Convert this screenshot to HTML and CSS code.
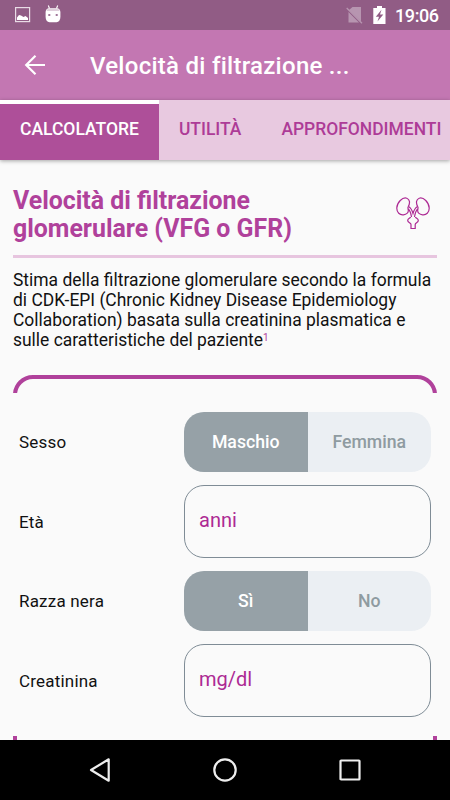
FILE: index.html
```html
<!DOCTYPE html>
<html lang="it">
<head>
<meta charset="utf-8">
<title>Velocità di filtrazione glomerulare</title>
<link rel="stylesheet" href="styles.css">
</head>
<body>
<div class="screen">
  <div class="status">
    <svg class="ic-pic" width="16" height="16" viewBox="0 0 16 16"><rect x=".6" y=".6" width="14" height="14" fill="none" stroke="#e9dce6" stroke-width="1.2"/><path d="M2 13V10.500L4 8L6 8.500L8.500 10L10.500 9L13 11V13Z" fill="#fff"/></svg>
    <svg class="ic-droid" width="16" height="18" viewBox="0 0 16 18"><path d="M3.300 .5L4.600 3.800M12.700 .5L11.400 3.800" stroke="#fff" stroke-width="1.100"/><path d="M.6 7Q1 3.500 4 3.300H12Q15 3.500 15.400 7V12Q15.200 17 11.500 17.200H4.500Q.8 17 .6 12Z" fill="#fff"/><path d="M1.500 6Q2 3.800 4 3.600H12Q14 3.800 14.500 6Z" fill="#e0cfdc"/><path d="M3.300 9h2v2h-2zM10.700 9h2v2h-2z" fill="#a1779a"/></svg>
    <span class="grow"></span>
    <svg class="ic-sim" width="18" height="18" viewBox="0 0 18 18"><path d="M6.500 1H15V15.500L3 3.900ZM2.500 6L13 16.500H2.500Z" fill="#b795b0"/><path d="M.7 2L16 17.300" stroke="#b795b0" stroke-width="1.300"/></svg>
    <svg class="ic-bat" width="13" height="18" viewBox="0 0 13 18"><path d="M4 0H9V2H12.500V18H.3V2H4Z" fill="#fff"/><path d="M8.500 3.800L2.800 10.700H6L4.500 15.500L10.300 8.600H7Z" fill="#915c85"/></svg>
    <span class="clock">19:06</span>
  </div>
  <header class="bar">
    <svg width="22" height="22" viewBox="0 0 22 22" fill="none" stroke="#fff" stroke-width="2.200"><path d="M21 11H2.500M11.500 1.700L2.200 11L11.500 20.300"/></svg>
    <span class="bar-title">Velocità di filtrazione ...</span>
  </header>
  <nav class="tabs">
    <span class="tab active">CALCOLATORE</span>
    <span class="tab">UTILITÀ</span>
    <span class="tab">APPROFONDIMENTI</span>
  </nav>
  <main>
    <div class="head">
      <h1>Velocità di filtrazione<br>glomerulare (VFG o GFR)</h1>
      <svg width="34" height="33" viewBox="0 0 34 33" fill="none" stroke="#ad2a94" stroke-width="1.200"><path d="M12.300 9.500C14.300 6 13.800 2.300 10.800 1.200C6.500-.2 1 5.500 .8 11C.7 15.500 3.800 18.300 7.500 17.800C10.300 17.500 12.500 15.700 12.300 13.300C12.200 11.700 11.500 10.800 12.300 9.500Z"/><path d="M21.700 9.500C19.700 6 20.200 2.300 23.200 1.200C27.500-.2 33 5.500 33.200 11C33.300 15.500 30.200 18.300 26.500 17.800C23.700 17.500 21.500 15.700 21.700 13.300C21.800 11.700 22.500 10.800 21.700 9.500Z"/><path d="M12.500 9.500C14.500 10.500 16 13 17 16.500C18 13 19.500 10.500 21.500 9.500M12.200 12C14 13.500 15 16.500 15.500 20M21.800 12C20 13.500 19 16.500 18.500 20"/><path d="M14.500 20C14.500 21.300 11.700 21.500 11.700 23.500C11.700 25.700 15 25.800 15 27.500V31.500H19.200V27.500C19.200 25.800 22.300 25.700 22.300 23.500C22.300 21.500 19.500 21.300 19.500 20"/></svg>
    </div>
    <p class="desc">Stima della filtrazione glomerulare secondo la formula<br>di CDK-EPI (Chronic Kidney Disease Epidemiology<br>Collaboration) basata sulla creatinina plasmatica e<br>sulle caratteristiche del paziente<span class="ref">1</span></p>
    <div class="cap top"></div>
    <div class="form">
      <span class="label">Sesso</span>
      <div class="toggle"><span class="opt on">Maschio</span><span class="opt">Femmina</span></div>
      <span class="label">Età</span>
      <div class="field">anni</div>
      <span class="label">Razza nera</span>
      <div class="toggle"><span class="opt on">Sì</span><span class="opt">No</span></div>
      <span class="label">Creatinina</span>
      <div class="field">mg/dl</div>
    </div>
    <div class="cap bottom"></div>
  </main>
  <div class="navbar">
    <svg width="24" height="28" viewBox="0 0 24 28"><path d="M20.700 3.300V24.700L3 14Z"/></svg>
    <svg width="28" height="28" viewBox="0 0 28 28"><circle cx="14" cy="14" r="10.700"/></svg>
    <svg width="24" height="28" viewBox="0 0 24 28"><rect x="2.500" y="4.500" width="19" height="19" rx=".6"/></svg>
  </div>
</div>
</body>
</html>
```

FILE: styles.css
```css
* { box-sizing: border-box; }
body { margin: 0; font-family: Roboto, "Liberation Sans", sans-serif; }
.screen { width: 450px; height: 800px; display: flex; flex-direction: column; overflow: hidden; background: #fafafa; }
.status { height: 30px; flex: none; display: flex; align-items: flex-start; background: #915c85; padding: 0 10px 0 15px; }
.status svg { flex: none; }
.ic-pic { margin-top: 7px; }
.ic-droid { margin: 5px 0 0 14px; }
.grow { flex: 1; }
.ic-sim { margin: 6px 9px 0 0; }
.ic-bat { margin: 6px 9px 0 0; }
.clock { width: 45px; font-size: 18px; line-height: 31px; color: #fff; white-space: nowrap; font-weight: 500; letter-spacing: -.4px; }
.bar { height: 70px; flex: none; display: flex; align-items: center; background: #c377b2; padding-left: 24px; }
.bar-title { margin: 2px 0 0 44px; font-size: 24px; line-height: 30px; font-weight: 500; letter-spacing: .27px; color: #fff; white-space: nowrap; }
.tabs { height: 60px; flex: none; display: flex; background: #e8c9e0; box-shadow: 0 1px 4px rgba(0,0,0,.35); position: relative; }
.tab { padding: 0 20px; font-size: 17.450px; line-height: 58px; font-weight: 500; color: #ad3b97; white-space: nowrap; }
.active { width: 159px; background: #ae4f99; border-top: 4px solid #fff; color: #fff; line-height: 50px; font-size: 17.500px; }
main { flex: 1; min-height: 0; overflow: hidden; padding: 26px 13px 0; }
.head { height: 72px; display: flex; justify-content: space-between; border-bottom: 3px solid #e7c5df; padding-right: 7px; }
.head svg { margin-top: 11px; }
h1 { margin: 1px 0 0; font-size: 24.900px; line-height: 28px; font-weight: 700; color: #b0419b; white-space: nowrap; }
.desc { margin: 12px 0 0; font-size: 17.450px; line-height: 20px; color: #111; white-space: nowrap; height: 105px; }
.ref { font-size: 10px; line-height: 0; vertical-align: 5px; color: #b0419b; }
.cap { height: 18px; overflow: hidden; }
.cap::before { content: ""; display: block; height: 50px; border: 4px solid #b0419b; border-radius: 20px; }
.bottom { margin-top: 19px; height: 26px; display: flex; align-items: flex-end; }
.bottom::before { flex: 1; }
.form { display: grid; grid-template-columns: 165px 247px; row-gap: 13px; align-items: center; padding: 19px 0 0 6px; }
.label { font-size: 17px; letter-spacing: .2px; color: #111; line-height: 20px; }
.toggle { height: 60px; display: flex; border-radius: 20px; overflow: hidden; background: #ebeff3; }
.opt { flex: 1; text-align: center; line-height: 60px; font-size: 17.700px; font-weight: 500; color: #8f9ba1; }
.on { background: #96a1a7; color: #fff; }
.field { height: 73px; border: 1px solid #7f8c96; border-radius: 20px; padding-left: 14px; line-height: 69px; font-size: 20px; color: #ad2a94; }
.navbar { height: 60px; flex: none; background: #000; display: flex; align-items: center; justify-content: space-between; padding: 0 88px; }
.navbar svg { fill: none; stroke: #eee; stroke-width: 2.200; stroke-linejoin: round; }
```
